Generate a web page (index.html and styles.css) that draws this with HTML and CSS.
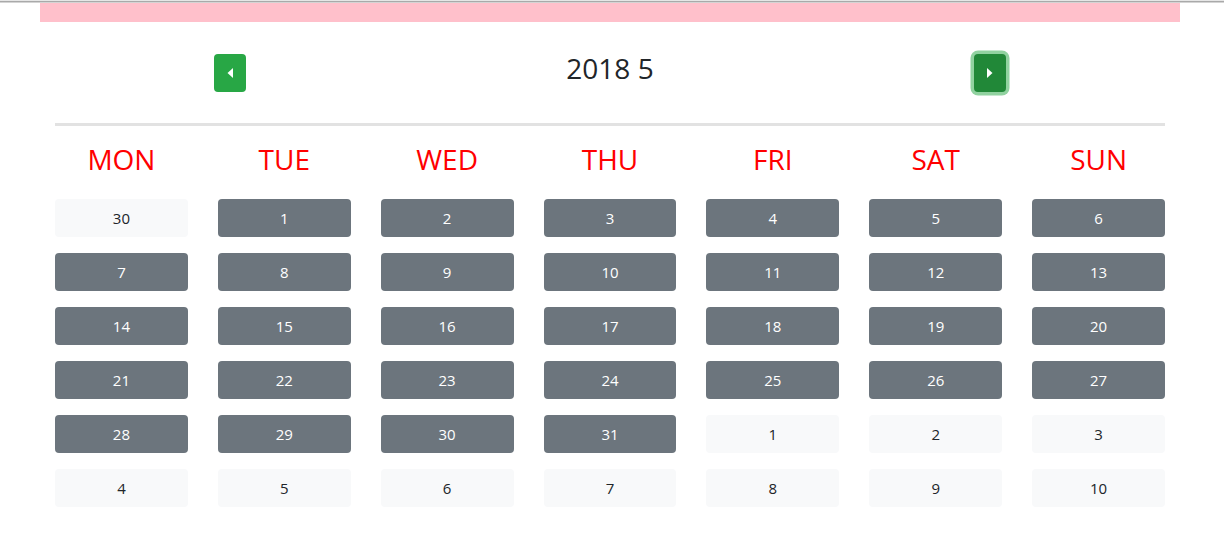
FILE: index.html
```html
<!DOCTYPE html>
<html lang="en">
<head>
<meta charset="utf-8">
<title>Calendar</title>
<link rel="stylesheet" href="styles.css">
</head>
<body>
<div class="chrome"></div>
<div class="container">
  <div class="banner"></div>
  <div class="calendar">
    <div class="header">
      <button class="nav-btn" type="button" aria-label="Previous month">
        <svg width="6" height="10" viewBox="0 0 6 10"><polygon points="6,0 6,10 0.5,5" fill="#fff"/></svg>
      </button>
      <h3 class="title">2018 5</h3>
      <button class="nav-btn nav-btn-active" type="button" aria-label="Next month">
        <svg width="6" height="10" viewBox="0 0 6 10"><polygon points="0,0 0,10 5.5,5" fill="#fff"/></svg>
      </button>
    </div>
    <div class="rule"></div>
    <div class="days">
      <div class="day">MON</div>
      <div class="day">TUE</div>
      <div class="day">WED</div>
      <div class="day">THU</div>
      <div class="day">FRI</div>
      <div class="day">SAT</div>
      <div class="day">SUN</div>
    </div>
    <div class="cells">
      <div class="cell muted">30</div>
      <div class="cell">1</div>
      <div class="cell">2</div>
      <div class="cell">3</div>
      <div class="cell">4</div>
      <div class="cell">5</div>
      <div class="cell">6</div>
      <div class="cell">7</div>
      <div class="cell">8</div>
      <div class="cell">9</div>
      <div class="cell">10</div>
      <div class="cell">11</div>
      <div class="cell">12</div>
      <div class="cell">13</div>
      <div class="cell">14</div>
      <div class="cell">15</div>
      <div class="cell">16</div>
      <div class="cell">17</div>
      <div class="cell">18</div>
      <div class="cell">19</div>
      <div class="cell">20</div>
      <div class="cell">21</div>
      <div class="cell">22</div>
      <div class="cell">23</div>
      <div class="cell">24</div>
      <div class="cell">25</div>
      <div class="cell">26</div>
      <div class="cell">27</div>
      <div class="cell">28</div>
      <div class="cell">29</div>
      <div class="cell">30</div>
      <div class="cell">31</div>
      <div class="cell muted">1</div>
      <div class="cell muted">2</div>
      <div class="cell muted">3</div>
      <div class="cell muted">4</div>
      <div class="cell muted">5</div>
      <div class="cell muted">6</div>
      <div class="cell muted">7</div>
      <div class="cell muted">8</div>
      <div class="cell muted">9</div>
      <div class="cell muted">10</div>
    </div>
  </div>
</div>
</body>
</html>
```

FILE: styles.css
```css
* {
  box-sizing: border-box;
}

html, body {
  margin: 0;
  padding: 0;
  background: #fff;
}

body {
  font-family: "Open Sans", "Noto Sans", sans-serif;
  color: #212529;
}

.chrome {
  height: 3px;
  background: linear-gradient(#e6e6e6 0 1px, #a9a9a9 1px 2px, #d4d4d4 2px 3px);
}

.container {
  width: 1140px;
  margin-left: 40px;
}

.banner {
  height: 19px;
  background: #ffc0cb;
}

.calendar {
  padding: 0 15px;
}

.header {
  display: flex;
  align-items: flex-start;
  padding: 30px 159px 31px;
}

.nav-btn {
  width: 32px;
  height: 38px;
  margin-top: 2px;
  padding: 0;
  border: none;
  border-radius: 4px;
  background: #28a745;
  display: flex;
  align-items: center;
  justify-content: center;
  cursor: pointer;
}

.nav-btn-active {
  background: #218838;
  box-shadow: 0 0 0 3.5px rgba(72, 180, 97, 0.6);
}

.title {
  flex: 1;
  margin: 0;
  text-align: center;
  font-size: 28px;
  line-height: 1.2;
  font-weight: 400;
  color: #212529;
}

.rule {
  height: 3px;
  background: #e2e2e2;
}

.days {
  display: grid;
  grid-template-columns: repeat(7, 1fr);
  column-gap: 30px;
  margin-top: 17px;
}

.day {
  text-align: center;
  color: #ff0000;
  font-size: 28px;
  line-height: 1.2;
  font-weight: 500;
}

.cells {
  display: grid;
  grid-template-columns: repeat(7, 1fr);
  column-gap: 30px;
  row-gap: 16px;
  margin-top: 22px;
}

.cell {
  height: 38px;
  border-radius: 4px;
  background: #6c757d;
  color: #fff;
  font-size: 15px;
  display: flex;
  align-items: center;
  justify-content: center;
}

.cell.muted {
  background: #f8f9fa;
  color: #212529;
}
```
